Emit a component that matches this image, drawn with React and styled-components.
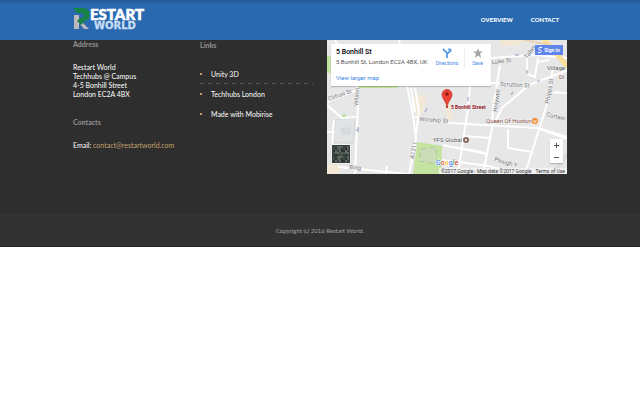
import React from "react";
import styled, { createGlobalStyle } from "styled-components";

const Global = createGlobalStyle`
  * { box-sizing: border-box; }
  body { margin: 0; background: #fff; font-family: Lato, "Open Sans", sans-serif; }
  button { font: inherit; padding: 0; border: 0; cursor: pointer; }
  a { color: inherit; text-decoration: none; }
`;

const Header = styled.header`
  position: sticky;
  top: 0;
  z-index: 5;
  height: 40px;
  background: linear-gradient(#22588f, #2969b0 4px);
`;
const Container = styled.div`
  width: 100%;
  max-width: 510px;
  margin: 0 auto;
  padding: 0 8px;
`;
const Bar = styled(Container)`
  height: 100%;
  display: flex;
  align-items: center;
  justify-content: space-between;
`;
const Nav = styled.nav`
  display: flex;
  gap: 18px;
  padding-right: 8px;
`;
const NavLink = styled.a`
  color: #fff;
  font: 900 6px/8px Lato, sans-serif;
  text-transform: uppercase;
`;
const Info = styled.section`
  background: #2e2e2e;
  padding-bottom: 40px;
`;
const Columns = styled(Container)`
  display: grid;
  grid-template-columns: 1fr 1fr 240px;
  gap: 14px;
`;
const Column = styled.div`
  color: #fff;
  font-size: 7px;
  line-height: 9px;
  padding-top: ${(p) => p.$top || 0}px;
`;
const Heading = styled.h2`
  margin: 0 0 14px;
  color: #8c8c8c;
  font-size: 7px;
  font-weight: 900;
  line-height: 9px;
`;
const Para = styled.p`
  margin: 0 0 19px;
`;
const Mail = styled.a`
  color: #c1a06a;
`;
const List = styled.ul`
  list-style: none;
  margin: 0;
  padding: 0;
`;
const Item = styled.li`
  display: flex;
  align-items: center;
  gap: 9px;
  height: 20px;
  &::before {
    content: "";
    width: 2px;
    height: 2px;
    background: #c1a06a;
  }
  ${(p) => p.$ruled && `
    background: repeating-linear-gradient(90deg, #5a5a5a 0 4px, transparent 4px 8px) bottom / 100% 1px no-repeat;
  `}
`;
const MapBox = styled.div`
  position: relative;
  height: 134px;
  overflow: hidden;
  background: #e7e7e7;
  font-family: Roboto, sans-serif;
`;
const MapSvg = styled.svg`
  display: block;
  width: 240px;
  height: 134px;
`;
const Card = styled.div`
  position: absolute;
  left: 4px;
  top: 4px;
  width: 160px;
  height: 42px;
  background: #fff;
  box-shadow: 0 1px 1px rgba(0, 0, 0, 0.2);
  display: flex;
  padding: 4px 1px 4px 5px;
`;
const Place = styled.div`
  flex: 1;
  min-width: 0;
  display: flex;
  flex-direction: column;
  align-items: flex-start;
  white-space: nowrap;
`;
const PlaceName = styled.strong`
  font-size: 7px;
  font-weight: 500;
  line-height: 9px;
  color: #000;
`;
const PlaceText = styled.span`
  font-size: 6px;
  line-height: 10px;
  color: #555;
`;
const Larger = styled.a`
  margin-top: 7px;
  font-size: 6px;
  line-height: 8px;
  color: #3a84df;
`;
const Action = styled.button`
  width: ${(p) => p.$width}px;
  height: 20px;
  background: none;
  display: flex;
  flex-direction: column;
  align-items: center;
  gap: 2px;
  && {
    font-size: 5px;
    line-height: 7px;
    color: #3a84df;
    border-left: ${(p) => (p.$divided ? "1px solid #ececec" : "0")};
  }
`;
const SignIn = styled.button`
  position: absolute;
  right: 4px;
  top: 5px;
  width: 28px;
  height: 10px;
  background: #5f85ec;
  display: flex;
  align-items: center;
  justify-content: center;
  gap: 2px;
  && {
    color: #fff;
    font-size: 5px;
    font-weight: 700;
    line-height: 8px;
  }
`;
const Zoom = styled.div`
  position: absolute;
  right: 4px;
  bottom: 11px;
  width: 13px;
  background: #fff;
  box-shadow: 0 1px 1px rgba(0, 0, 0, 0.2);
`;
const ZoomButton = styled.button`
  display: grid;
  place-items: center;
  width: 13px;
  height: 12px;
  background: none;
`;
const Credit = styled.div`
  position: absolute;
  right: 0;
  bottom: 0;
  height: 6px;
  padding: 0 2px;
  display: flex;
  gap: 4px;
  background: rgba(245, 245, 245, 0.8);
  color: #333;
  font-size: 5px;
  line-height: 6px;
  white-space: nowrap;
`;
const Footer = styled.footer`
  background: #323232;
  border-bottom: 1px solid #2a2628;
  padding: 12px 0 11px;
  text-align: center;
  color: #a5a5a5;
  font-size: 6px;
  line-height: 9px;
`;

function Logo() {
  return (
    <svg width="76" height="24" viewBox="0 0 76 24" role="img" aria-label="Restart World">
      <path d="M1 8h5v14H1zM8 14l8 8h-5L6 16z" fill="#beb9bb" />
      <path d="M0 1h10c8 0 9 11 2 13l-4 4-4-4 3-3c5 0 5-5 1-5H4z" fill="#178349" />
      <text x="17" y="13" fontFamily="Lato" fontWeight="900" fontSize="15" fill="#fff" stroke="#fff" strokeWidth=".6">ESTART</text>
      <text x="21" y="22" fontFamily="DejaVu Sans" fontWeight="700" fontSize="10" fill="#c9ddf5" stroke="#c9ddf5" strokeWidth=".3">WORLD</text>
    </svg>
  );
}

const roads = [
  "M8 0L30 46 31 65 28 134", "M72 0L80 46 86 75 89 98 82 134", "M88 77L123 83 211 88 240 97",
  "M143 46L141 68 131 134", "M165 88L156 134", "M226 28L220 64 198 134",
  "M116 105L160 114M137 96L163 98M181 89V108L205 112", "M131 108L156 112M115 120L162 126 240 149",
  "M123 43L165 43 200 46 241 30", "M150 19L208 15 241 18", "M173 25L166 68 165 88",
  "M201 46L175 68 168 82", "M200 18V34L208 37 211 18M211 22L222 20", "M211 88L240 99",
  "M0 65L15 78 31 77M7 80L5 106M0 92H8", "M11 127L81 134", "M60 126L59 134", "M0 62L31 50", "M221 52L240 53", "M198 16L222 0"
];
const labels = [
  [165, 24, -6, "Luke St"], [173, 46, 3, "Scrutton St"], [222, 64, -80, "Phipps St"],
  [92, 81, 4, "Worship St"], [2, 61, -20, "Clifton St"], [22, 129, 5, "Bing"],
  [167, 121, 16, "Plough Y"], [219, 76, 14, "Curtain"], [170, 72, -82, "Holywell"],
  [200, 19, -52, "Taber"], [87, 119, -80, "A1211"], [31, 66, -86, "Wilson"]
];
const thumb = Array.from({ length: 64 }, (_, i) => ({
  x: 6 + (i % 8) * 2,
  y: 106 + Math.floor(i / 8) * 2,
  fill: ["#3b433f", "#56605a", "#2b312f", "#626a65", "#465047"][(i * i * 3 + i * 7 + (i >> 3)) % 5]
}));

function StreetMap() {
  return (
    <MapSvg viewBox="0 0 240 134" role="img" aria-label="Map of Bonhill Street">
      <rect width="240" height="134" fill="#e7e7e7" />
      <path d="M0 16H6V34L0 32zM31 43H74L70 48H31zM90 102L115 106 114 134H86z" fill="#c4e3a1" />
      <path d="M94 109L109 107 110 124 92 121z" fill="#cbdcb9" stroke="#aac795" strokeDasharray="5 4" />
      <path d="M88 56L100 54 96 71 91 78 87 70zM0 124L14 125 12 134H0zM174 0H198L190 6H174zM118 62L125 65V81L120 79z" fill="#f3e8d5" />
      <path d="M8 80L28 78 26 103 7 102z" fill="#e1e3e5" stroke="#d5d8da" />
      <path d="M15 88H23V94H15z" fill="#d8dadd" stroke="#c9cdd1" strokeWidth=".5" />
      <circle cx="17" cy="76" r="2" fill="#b8df98" />
      <g fill="none" stroke="#fff" strokeWidth="2">
        {roads.map((d) => <path key={d} d={d} />)}
      </g>
      <path d="M88 48L92 72 89 94M84 48L88 72" fill="none" stroke="#fff" strokeWidth="2" />
      <path d="M215 -3L241 27" fill="none" stroke="#fadf9b" strokeWidth="5" />
      <path d="M222 5L198 0" stroke="#e8d2ae" strokeWidth="2" />
      <path d="M240 114L226 134" stroke="#d0d1d3" strokeWidth="4" strokeDasharray="1 1" />
      <g stroke="#aeb8cf" strokeWidth="1.5">
        <path d="M29 90l3 0M31 87v5M141 57v4M200 30v4M188 15h4M210 42l3-2M184 55l2-3M98 72l2-4" />
      </g>
      <g fontFamily="Roboto" fontSize="6" fill="#74787c" stroke="#f4f4f4" strokeWidth="1" paintOrder="stroke">
        {labels.map(([x, y, r, t]) => (
          <text key={t} transform={`translate(${x} ${y}) rotate(${r})`}>{t}</text>
        ))}
        <g fill="#55585b">
          <text x="106" y="102">YFS Global</text>
          <text x="220" y="30">Village</text>
        </g>
        <g fill="#8b5146">
          <text x="159" y="83">Queen Of Hoxton</text>
          <text x="232" y="39">Di</text>
        </g>
        <text x="124" y="69" fill="#8e1118" fontWeight="700" fontSize="5">5 Bonhill Street</text>
      </g>
      <circle cx="208" cy="81" r="3" fill="#f28a2e" />
      <path d="M207 80v2h2v-2" fill="none" stroke="#fff" strokeWidth=".8" />
      <circle cx="139" cy="100" r="3" fill="#8a6b61" />
      <circle cx="139" cy="100" r="1" fill="#fff" />
      <path d="M120 67C119 61 115 59 115 54.500A5 5 0 0 1 125 54.500C125 59 121 61 120 67z" fill="#ea4335" stroke="#b92c24" strokeWidth=".6" />
      <circle cx="120" cy="54" r="1.700" fill="#8c1712" />
      <circle cx="120" cy="67" r="1" fill="#b31412" />
      <rect x="4" y="104" width="20" height="20" fill="#fff" stroke="#c9c9c9" strokeWidth=".5" />
      <rect x="5" y="105" width="18" height="18" fill="#39413d" />
      {thumb.map((t) => <rect key={`${t.x}-${t.y}`} x={t.x} y={t.y} width="2" height="2" fill={t.fill} />)}
      <text x="109" y="125" fontFamily="Roboto" fontWeight="500" fontSize="7" stroke="#fff" strokeWidth="1" paintOrder="stroke">
        <tspan fill="#4285f4">G</tspan><tspan fill="#ea4335">o</tspan><tspan fill="#fbbc05">o</tspan><tspan fill="#4285f4">g</tspan><tspan fill="#34a853">l</tspan><tspan fill="#ea4335">e</tspan>
      </text>
    </MapSvg>
  );
}

export default function App() {
  return (
    <>
      <Global />
      <Header>
        <Bar>
          <a href="#home"><Logo /></a>
          <Nav>
            <NavLink href="#overview">Overview</NavLink>
            <NavLink href="#contact">Contact</NavLink>
          </Nav>
        </Bar>
      </Header>
      <Info>
        <Columns>
          <Column>
            <Heading>Address</Heading>
            <Para>
              Restart World<br />Techhubs @ Campus<br />4-5 Bonhill Street<br />London EC2A 4BX
            </Para>
            <Heading>Contacts</Heading>
            <Para>Email: <Mail href="mailto:contact@restartworld.com">contact@restartworld.com</Mail></Para>
          </Column>
          <Column $top={1}>
            <Heading>Links</Heading>
            <List>
              <Item $ruled><a href="#unity">Unity 3D</a></Item>
              <Item><a href="#techhubs">Techhubs London</a></Item>
              <Item><a href="#mobirise">Made with Mobirise</a></Item>
            </List>
          </Column>
          <MapBox>
            <StreetMap />
            <Card>
              <Place>
                <PlaceName>5 Bonhill St</PlaceName>
                <PlaceText>5 Bonhill St, London EC2A 4BX, UK</PlaceText>
                <Larger href="#map">View larger map</Larger>
              </Place>
              <Action $width={34}>
                <svg width="10" height="10" viewBox="0 0 10 10" fill="none" stroke="#64a1e8" strokeWidth="2">
                  <path d="M5 10V5L1 1M5 6L8 3" /><path d="M6 1h3v3z" fill="#64a1e8" strokeWidth="1" />
                </svg>
                Directions
              </Action>
              <Action $width={26} $divided>
                <svg width="10" height="10" viewBox="0 0 10 10" fill="#a4a4a4">
                  <path d="M5 0l1.200 3.500H10L7 5.800 8.200 10 5 7.500 1.800 10 3 5.800 0 3.500h3.800z" />
                </svg>
                Save
              </Action>
            </Card>
            <SignIn>
              <svg width="4" height="6" viewBox="0 0 4 6" fill="none" stroke="#fff" aria-hidden="true">
                <path d="M4 .5H2a1 1 0 0 0 0 2.500c2 0 2 2.500 0 2.500H0" />
              </svg>
              Sign in
            </SignIn>
            <Zoom>
              <ZoomButton aria-label="Zoom in">
                <svg width="5" height="5"><path d="M0 2h5v1H0zM2 0h1v5H2z" fill="#555" /></svg>
              </ZoomButton>
              <ZoomButton aria-label="Zoom out">
                <svg width="5" height="5"><path d="M0 2h5v1H0z" fill="#555" /></svg>
              </ZoomButton>
            </Zoom>
            <Credit><span>©2017 Google - Map data ©2017 Google</span><a href="#terms">Terms of Use</a></Credit>
          </MapBox>
        </Columns>
      </Info>
      <Footer>Copyright (c) 2016 Restart World.</Footer>
    </>
  );
}
